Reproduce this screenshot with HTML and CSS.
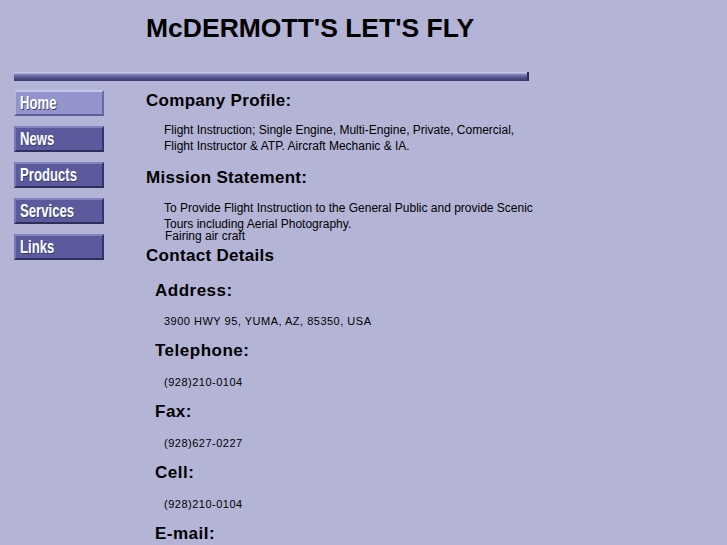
FILE: index.html
```html
<!DOCTYPE html>
<html>
<head>
<meta charset="utf-8">
<link rel="stylesheet" href="styles.css">
</head>
<body>
<header class="header">
  <h1 class="title">McDERMOTT'S LET'S FLY</h1>
</header>
<div class="bar"></div>
<div class="layout">
  <nav class="nav">
    <a class="btn btn-active" href="#"><span class="btn-label">Home</span></a>
    <a class="btn" href="#"><span class="btn-label">News</span></a>
    <a class="btn" href="#"><span class="btn-label">Products</span></a>
    <a class="btn" href="#"><span class="btn-label">Services</span></a>
    <a class="btn" href="#"><span class="btn-label">Links</span></a>
  </nav>
  <main class="main">
    <h2 class="h2">Company Profile:</h2>
    <p class="text">Flight Instruction; Single Engine, Multi-Engine, Private, Comercial, Flight Instructor &amp; ATP. Aircraft Mechanic &amp; IA.</p>
    <h2 class="h2">Mission Statement:</h2>
    <p class="text text-tight">To Provide Flight Instruction to the General Public and provide Scenic Tours including Aerial Photography.</p>
    <div class="note">Fairing air craft</div>
    <h2 class="h2 h2-contact">Contact Details</h2>
    <h3 class="h3 h3-first">Address:</h3>
    <p class="small small-first">3900 HWY 95, YUMA, AZ, 85350, USA</p>
    <h3 class="h3">Telephone:</h3>
    <p class="small">(928)210-0104</p>
    <h3 class="h3">Fax:</h3>
    <p class="small">(928)627-0227</p>
    <h3 class="h3">Cell:</h3>
    <p class="small">(928)210-0104</p>
    <h3 class="h3">E-mail:</h3>
  </main>
</div>
</body>
</html>
```
FILE: styles.css
```css
html, body {
  margin: 0;
  padding: 0;
  background: #b4b4d6;
  color: #000;
  font-family: "Liberation Sans", Arial, sans-serif;
}
.header {
  padding: 12px 0 0 146px;
  height: 60px;
  box-sizing: border-box;
}
.title {
  margin: 0;
  font-size: 26.5px;
  font-weight: bold;
  line-height: 32px;
}
.bar {
  margin: 12px 0 0 14px;
  width: 515px;
  height: 9px;
  box-sizing: border-box;
  background: linear-gradient(#c8c8ea 0, #c8c8ea 1px, #8a8ac0 2px, #6a6aa4 4px, #505088 6px, #3a3a6a 9px);
  border-right: 2px solid #2e2e55;
}
.layout {
  display: flex;
  margin-top: 9px;
}
.nav {
  width: 132px;
  padding-left: 14px;
  display: flex;
  flex-direction: column;
  gap: 10px;
}
.btn {
  display: block;
  width: 90px;
  height: 26px;
  box-sizing: border-box;
  padding: 1px 0 0 4px;
  background: #5a5a9c;
  border-top: 2px solid #8383c0;
  border-left: 2px solid #7878b6;
  border-right: 2px solid #34346a;
  border-bottom: 2px solid #2e2e5e;
  color: #fff;
  text-decoration: none;
  font-family: "Liberation Sans", Arial, sans-serif;
  font-weight: bold;
  font-size: 18px;
  line-height: 20px;
  text-shadow: 1px 1px 0 #3a3a70;
  overflow: hidden;
  white-space: nowrap;
}
.btn-label {
  display: inline-block;
  transform: scaleX(0.73);
  transform-origin: left center;
}
.btn-active {
  background: #9494cc;
  border-top-color: #c4c4ec;
  border-left-color: #b4b4e4;
  border-right-color: #6a6aa6;
  border-bottom-color: #5c5c98;
}
.main {
  flex: 1;
  padding-top: 1px;
}
.h2 {
  margin: 0;
  font-size: 17px;
  font-weight: bold;
  line-height: 20px;
  letter-spacing: 0.3px;
}
.text {
  margin: 11px 0 14px 18px;
  font-size: 12px;
  line-height: 16px;
  width: 380px;
}
.text-tight {
  margin-top: 12px;
  margin-bottom: 0;
}
.note {
  margin: -2px 0 4px 19px;
  font-size: 12px;
  line-height: 12px;
}
.h3 {
  margin: 13px 0 0 9px;
  font-size: 17px;
  font-weight: bold;
  line-height: 20px;
  letter-spacing: 0.5px;
}
.h3-first {
  margin-top: 15px;
}
.small {
  margin: 14px 0 0 18px;
  font-size: 11px;
  line-height: 14px;
  letter-spacing: 0.5px;
}
.small-first {
  margin-top: 13px;
}
```
